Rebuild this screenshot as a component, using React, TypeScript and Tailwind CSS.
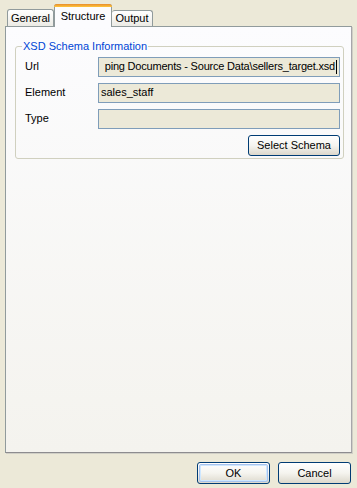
export default function App() {
  const font = { fontFamily: '"Liberation Sans", Arial, sans-serif' };

  return (
    <div
      className="w-[357px] h-[488px] bg-[#ece9d8] flex flex-col text-[11px] text-black overflow-hidden"
      style={font}
    >
      {/* Tabs */}
      <div className="flex items-end h-[26px] pl-[7px] relative z-10">
        <div className="h-[17px] w-[47px] border border-b-0 border-[#919b9c] rounded-t-[3px] bg-gradient-to-b from-white to-[#ecebe5] flex items-center justify-center">
          General
        </div>
        <div className="h-[23px] w-[58px] -mb-[1px] border border-b-0 border-[#919b9c] rounded-t-[3px] bg-[#fcfcfe] flex flex-col">
          <div className="h-[3px] -mx-[1px] -mt-[1px] rounded-t-[3px] bg-gradient-to-b from-[#e68b2c] to-[#ffc73c]" />
          <div className="flex-1 flex items-center justify-center pb-[1px]">Structure</div>
        </div>
        <div className="h-[16px] w-[41px] border border-b-0 border-l-0 border-[#919b9c] rounded-t-[3px] bg-gradient-to-b from-white to-[#ecebe5] flex items-center justify-center">
          Output
        </div>
      </div>

      {/* Tab page */}
      <div className="ml-[5px] w-[347px] h-[427px] border border-[#919b9c] border-r-[#a7a6aa] border-b-[#8d8c8f] bg-gradient-to-b from-[#fcfcfe] to-[#f4f3ee] shadow-[1px_1px_0_#d0cfc6] pt-[11px] pl-[9px] pr-[7px]">
        <fieldset className="min-w-0 border border-[#d0d0bf] rounded-[3px] h-[121px] pl-[9px] pr-[3px]">
          <legend className="-ml-[3px] px-[1px] text-[#0046d5]">XSD Schema Information</legend>
          <div className="flex flex-col gap-[6px] mt-[2px]">
            <div className="flex items-center h-[20px]">
              <div className="w-[73px] shrink-0">Url</div>
              <div className="flex-1 min-w-0 h-[20px] border border-[#7f9db9] bg-[#ece9d8] flex items-center justify-end whitespace-nowrap pr-[2px]">
                <span className="tracking-[-0.2px]">ping Documents - Source Data\sellers_target.xsd</span>
                <span className="inline-block w-[1px] h-[14px] bg-black ml-[1px]" />
              </div>
            </div>
            <div className="flex items-center h-[20px]">
              <div className="w-[73px] shrink-0">Element</div>
              <div className="flex-1 min-w-0 h-[20px] border border-[#7f9db9] bg-[#ece9d8] flex items-center px-[2px]">
                sales_staff
              </div>
            </div>
            <div className="flex items-center h-[20px]">
              <div className="w-[73px] shrink-0">Type</div>
              <div className="flex-1 min-w-0 h-[20px] border border-[#7f9db9] bg-[#ece9d8]" />
            </div>
            <div className="flex justify-end">
              <button className="w-[92px] h-[21px] border border-[#003c74] rounded-[3px] bg-gradient-to-b from-white via-[#f5f4ef] to-[#dcd8cc]">
                Select Schema
              </button>
            </div>
          </div>
        </fieldset>
      </div>

      {/* Bottom buttons */}
      <div className="flex justify-end gap-[8px] pr-[6px] mt-[9px]">
        <button className="w-[73px] h-[22px] border border-[#003c74] rounded-[3px] bg-gradient-to-b from-white via-[#f5f4ef] to-[#dcd8cc] p-[1px]">
          <div className="w-full h-full rounded-[2px] border border-[#a8c3ee] shadow-[inset_0_0_0_1px_#cee7ff] flex items-center justify-center">
            OK
          </div>
        </button>
        <button className="w-[73px] h-[22px] border border-[#003c74] rounded-[3px] bg-gradient-to-b from-white via-[#f5f4ef] to-[#dcd8cc]">
          Cancel
        </button>
      </div>
    </div>
  );
}
